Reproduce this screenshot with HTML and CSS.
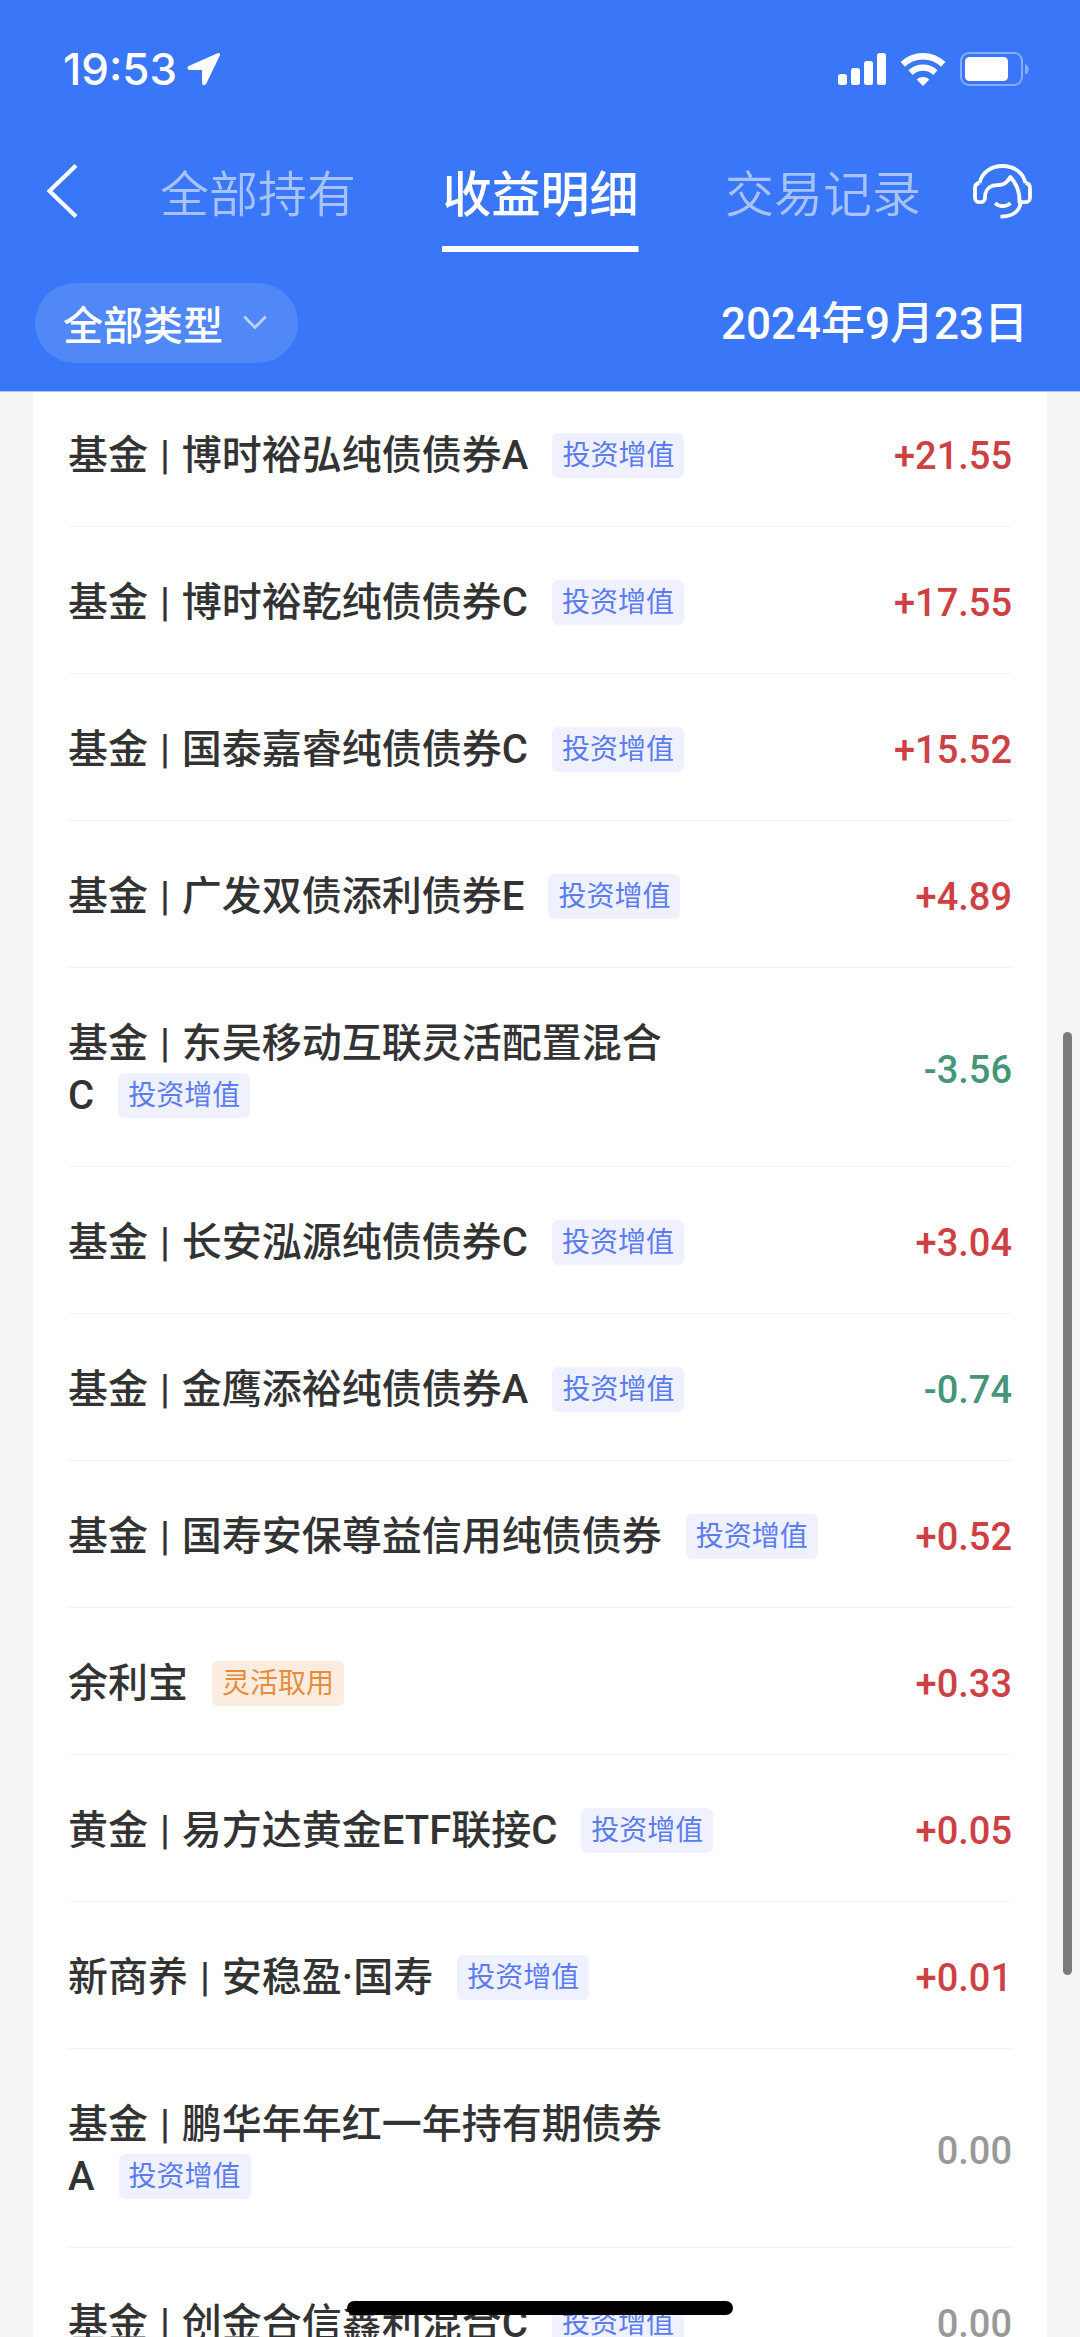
FILE: index.html
```html
<!DOCTYPE html>
<html lang="zh-CN">
<head>
<meta charset="utf-8">
<meta name="viewport" content="width=device-width, initial-scale=1">
<title>收益明细</title>
<link rel="stylesheet" href="styles.css">
</head>
<body>
<header class="header">
  <div class="status">
    <span class="status-time">19:53</span>
    <svg class="status-location" width="34" height="34" viewBox="0 0 34 34" aria-hidden="true"><path d="M30.500 1.200 2.200 13.800C-.4 15 .2 18 3 18h11.200c.6 0 .8.2.8.8V30.500c0 3 3 3.600 4.300 1L32.800 3.500C33.600 1.600 32.300.4 30.500 1.200Z" fill="#fff"/></svg>
    <svg class="status-signal" width="48" height="32" viewBox="0 0 48 32" fill="#fff" aria-hidden="true"><rect x="0" y="21" width="9" height="11" rx="2.500"/><rect x="13" y="15" width="9" height="17" rx="2.500"/><rect x="26" y="8" width="9" height="24" rx="2.500"/><rect x="39" y="0" width="9" height="32" rx="2.500"/></svg>
    <svg class="status-wifi" width="46" height="34" viewBox="0 0 46 34" aria-hidden="true"><g fill="none" stroke="#fff" stroke-width="6.400"><path d="M2.800 12.400a29 29 0 0 1 40.400 0"/><path d="M10.600 20.600a18 18 0 0 1 24.800 0"/></g><path d="M23 34l-6.300-6.600a9.500 9.500 0 0 1 12.600 0Z" fill="#fff"/></svg>
    <svg class="status-battery" width="70" height="34" viewBox="0 0 70 34" aria-hidden="true"><rect x="1" y="1" width="61" height="32" rx="8" fill="none" stroke="#86acfa" stroke-width="2"/><rect x="5" y="5" width="43" height="24" rx="4.500" fill="#fff"/><path d="M65 12c5 1.500 5 9 0 10.500Z" fill="#86acfa"/></svg>
  </div>
  <nav class="nav">
    <button class="icon-button" type="button" aria-label="返回"><svg width="31" height="54" viewBox="0 0 31 54" aria-hidden="true"><path d="M29 1.500 2.500 27 29 52.500" fill="none" stroke="#fff" stroke-width="4.200"/></svg></button>
    <div class="tabs">
      <a class="tab" href="#holdings">全部持有</a>
      <a class="tab tab-active" href="#earnings" aria-current="page">收益明细</a>
      <a class="tab" href="#trades">交易记录</a>
    </div>
    <button class="icon-button" type="button" aria-label="客服"><svg width="59" height="55" viewBox="0 0 59 55" fill="none" stroke="#fff" stroke-width="3.800" stroke-linejoin="round" aria-hidden="true"><path d="M6.500 19C9 8.500 18 2 29.500 2S50 8.500 52.500 19"/><path d="M6.500 19C3 19.500 2 21 2 24v9.500C2 37 3.500 38.200 7 38.200S12 37 12 33.500C12 27 15.500 22.800 20 21.700c5-1.200 10 .8 14.500-4.700l3-4C42.500 19 46.500 25 46.500 38.200H51.500c4 0 5.500-1.200 5.500-4.700V24c0-3-1-4.500-4.500-5"/><path d="M48 38.200C46.500 47.500 39 52.700 27.500 52.700M22 39.200c4.500 4 11 4 15.500 0"/></svg></button>
  </nav>
  <div class="filters">
    <button class="type-filter" type="button">全部类型<svg width="24" height="15" viewBox="0 0 24 15" aria-hidden="true"><path d="M1.200 1.500 12 12.500 22.800 1.500" fill="none" stroke="#bcd2fc" stroke-width="2.800"/></svg></button>
    <time class="date" datetime="2024-09-23">2024年9月23日</time>
  </div>
</header>
<main class="content">
  <ul class="list">
    <li class="row"><p class="name">基金 <span class="bar">|</span> 博时裕弘纯债债券A<span class="tag">投资增值</span></p><span class="amount gain">+21.55</span></li>
    <li class="row"><p class="name">基金 <span class="bar">|</span> 博时裕乾纯债债券C<span class="tag">投资增值</span></p><span class="amount gain">+17.55</span></li>
    <li class="row"><p class="name">基金 <span class="bar">|</span> 国泰嘉睿纯债债券C<span class="tag">投资增值</span></p><span class="amount gain">+15.52</span></li>
    <li class="row"><p class="name">基金 <span class="bar">|</span> 广发双债添利债券E<span class="tag">投资增值</span></p><span class="amount gain">+4.89</span></li>
    <li class="row"><p class="name">基金 <span class="bar">|</span> 东吴移动互联灵活配置混合<span class="tail">C<span class="tag">投资增值</span></span></p><span class="amount loss">-3.56</span></li>
    <li class="row"><p class="name">基金 <span class="bar">|</span> 长安泓源纯债债券C<span class="tag">投资增值</span></p><span class="amount gain">+3.04</span></li>
    <li class="row"><p class="name">基金 <span class="bar">|</span> 金鹰添裕纯债债券A<span class="tag">投资增值</span></p><span class="amount loss">-0.74</span></li>
    <li class="row"><p class="name">基金 <span class="bar">|</span> 国寿安保尊益信用纯债债券<span class="tag">投资增值</span></p><span class="amount gain">+0.52</span></li>
    <li class="row"><p class="name">余利宝<span class="tag tag-flexible">灵活取用</span></p><span class="amount gain">+0.33</span></li>
    <li class="row"><p class="name">黄金 <span class="bar">|</span> 易方达黄金ETF联接C<span class="tag">投资增值</span></p><span class="amount gain">+0.05</span></li>
    <li class="row"><p class="name">新商养 <span class="bar">|</span> 安稳盈·国寿<span class="tag">投资增值</span></p><span class="amount gain">+0.01</span></li>
    <li class="row"><p class="name">基金 <span class="bar">|</span> 鹏华年年红一年持有期债券<span class="tail">A<span class="tag">投资增值</span></span></p><span class="amount flat">0.00</span></li>
    <li class="row"><p class="name">基金 <span class="bar">|</span> 创金合信鑫利混合C<span class="tag">投资增值</span></p><span class="amount flat">0.00</span></li>
  </ul>
</main>
<div class="scroll-thumb" aria-hidden="true"></div>
<div class="home-indicator" aria-hidden="true"></div>
</body>
</html>
```

FILE: styles.css
```css
* {
  box-sizing: border-box;
}

body {
  display: flex;
  flex-direction: column;
  height: 100vh;
  margin: 0;
  background: #f5f5f5;
  color: #333;
  font-family: Roboto, "Noto Sans CJK SC", sans-serif;
  font-size: 40px;
}

button {
  padding: 0;
  border: 0;
  background: none;
  color: inherit;
  font: inherit;
}

svg {
  display: block;
}

/* Header */

.header {
  flex: none;
  background: #3976f8;
  border-bottom: 1px solid #a5c2fc;
  color: #fff;
}

.status {
  display: flex;
  align-items: center;
  height: 138px;
  padding: 0 50px 0 63px;
}

.status-time {
  font-family: Inter, sans-serif;
  font-size: 44px;
  font-weight: 500;
  line-height: 52px;
}

.status-location {
  margin-left: 10px;
}

.status-signal {
  margin-left: auto;
}

.status-wifi {
  margin: 0 14px;
}

.nav {
  display: flex;
  align-items: center;
  height: 114px;
  padding: 0 48px 0 47px;
}

.icon-button {
  flex: none;
  padding-bottom: 8px;
}

.tabs {
  display: flex;
  flex: 1;
  align-self: stretch;
  justify-content: space-between;
  margin: 0 52px 0 82px;
}

.tab {
  padding-top: 26px;
  border-bottom: 6px solid transparent;
  color: #a6c3fe;
  font-size: 49px;
  font-weight: 350;
  line-height: 64px;
  text-decoration: none;
}

.tab-active {
  background: linear-gradient(#fff, #fff) bottom / 100% 6px no-repeat border-box;
  color: #fff;
  font-weight: 500;
}

.filters {
  display: flex;
  align-items: center;
  justify-content: space-between;
  height: 139px;
  padding: 2px 52px 0 35px;
}

.type-filter {
  display: flex;
  align-items: center;
  gap: 20px;
  height: 80px;
  padding: 0 31px 0 28px;
  border-radius: 40px;
  background: #5088f7;
  font-weight: 500;
}

.date {
  padding-bottom: 6px;
  font-size: 44px;
  font-weight: 500;
}

/* Earnings list */

.content {
  flex: 1;
  min-height: 0;
  margin: 0 33px;
  overflow: hidden;
  background: #fff;
}

.list {
  margin: -12px 0 0;
  padding: 0 35px;
  list-style: none;
}

.row {
  display: flex;
  align-items: center;
  justify-content: space-between;
  padding: 50px 0 44px;
  border-bottom: 1px solid #f2f2f2;
}

.name {
  max-width: 760px;
  margin: 0;
  font-weight: 500;
  line-height: 52px;
}

.bar {
  margin: 0 2px;
}

.tail {
  white-space: nowrap;
}

.tag {
  display: inline-block;
  margin-left: 24px;
  padding: 0 10px;
  border-radius: 6px;
  background: #eff1fe;
  color: #5b7cf0;
  font-size: 28px;
  font-weight: 400;
  line-height: 45px;
  vertical-align: 4px;
}

.tag-flexible {
  background: #faecdf;
  color: #e88b3c;
}

.amount {
  flex: none;
  font-size: 38px;
  font-weight: 500;
  line-height: 52px;
}

.gain {
  color: #cd4145;
}

.loss {
  color: #469479;
}

.flat {
  color: #999;
}

/* Overlays */

.scroll-thumb {
  position: fixed;
  top: 1032px;
  right: 8px;
  bottom: 362px;
  width: 9px;
  border-radius: 5px;
  background: #7b7b7b;
}

.home-indicator {
  position: fixed;
  bottom: 22px;
  left: 50%;
  width: 386px;
  height: 14px;
  margin-left: -193px;
  border-radius: 7px;
  background: #000;
}
```
